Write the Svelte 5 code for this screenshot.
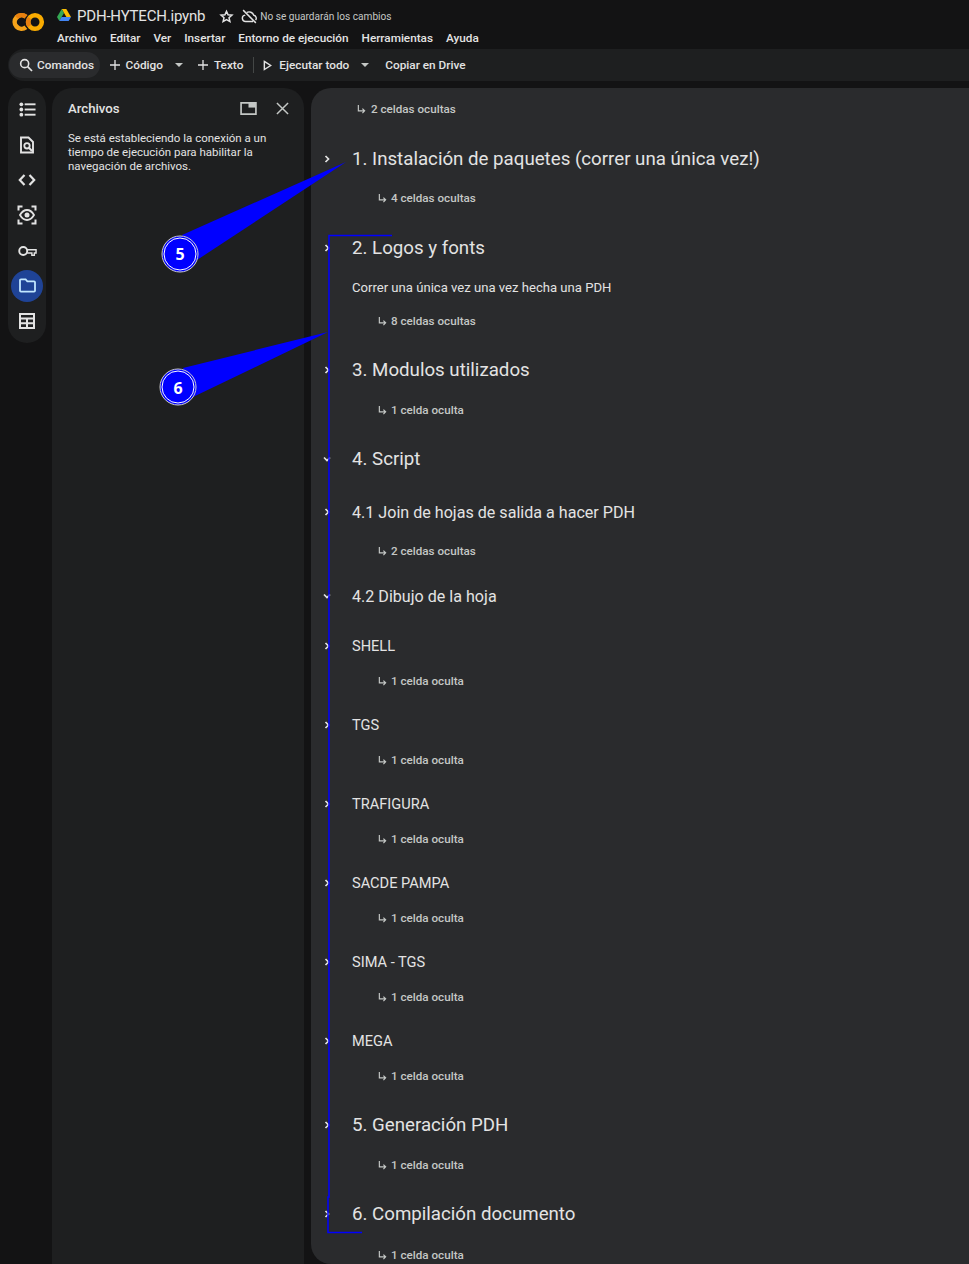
<script>
  const menu = ['Archivo','Editar','Ver','Insertar','Entorno de ejecución','Herramientas','Ayuda'];
  const items = [
    {t:'hidden', x:'first', s:'2 celdas ocultas'},
    {t:'h1', c:'r', s:'1. Instalación de paquetes (correr una única vez!)', first:true},
    {t:'hidden', s:'4 celdas ocultas'},
    {t:'h1', c:'r', s:'2. Logos y fonts'},
    {t:'p', s:'Correr una única vez una vez hecha una PDH'},
    {t:'hidden', s:'8 celdas ocultas'},
    {t:'h1', c:'r', s:'3. Modulos utilizados'},
    {t:'hidden', s:'1 celda oculta'},
    {t:'h1', c:'d', s:'4. Script'},
    {t:'h2', c:'r', s:'4.1 Join de hojas de salida a hacer PDH'},
    {t:'hidden', s:'2 celdas ocultas'},
    {t:'h2', c:'d', s:'4.2 Dibujo de la hoja'},
    ...['SHELL','TGS','TRAFIGURA','SACDE PAMPA','SIMA - TGS','MEGA'].flatMap(s => [
      {t:'h3', c:'r', s}, {t:'hidden', s:'1 celda oculta'}
    ]),
    {t:'h1', c:'r', s:'5. Generación PDH'},
    {t:'hidden', s:'1 celda oculta'},
    {t:'h1', c:'r', s:'6. Compilación documento'},
    {t:'hidden', x:'last', s:'1 celda oculta'},
  ];
</script>

<div class="page">
  <header class="top">
    <svg class="logo" viewBox="0 0 33 20" width="33" height="20" aria-hidden="true">
      <path d="M13.900 4.800A6.800 6.800 0 1 0 13.900 15.200" fill="none" stroke="#f5a31a" stroke-width="4.600"/>
      <path d="M13.900 4.800A6.800 6.800 0 0 0 4.500 5.400" fill="none" stroke="#e8800f" stroke-width="4.600"/>
      <circle cx="23" cy="10" r="6.800" fill="none" stroke="#f9ab00" stroke-width="4.600"/>
      <path d="M17.500 6A6.800 6.800 0 0 0 17.500 14" fill="none" stroke="#e8800f" stroke-width="4.600"/>
    </svg>
    <div class="titles">
      <div class="titlerow">
        <svg class="drive" viewBox="0 0 14 12" width="14" height="12" aria-hidden="true">
          <path d="M4.700 0h4.600l4.700 8H9.400z" fill="#fbbc04"/>
          <path d="M4.700 0 0 8l2.300 4 4.700-8z" fill="#34a853"/>
          <path d="M2.300 12h9.400L14 8H4.600z" fill="#4285f4"/>
        </svg>
        <span class="fname">PDH-HYTECH.ipynb</span>
        <svg class="star" viewBox="0 0 24 24" width="15" height="15" aria-hidden="true">
          <path d="M12 3.600l2.500 5.700 6.200.6-4.700 4.100 1.400 6.100L12 16.900l-5.400 3.200L8 14 3.300 9.900l6.200-.6z" fill="none" stroke="#e3e3e3" stroke-width="2.400"/>
        </svg>
        <svg class="cloud" viewBox="0 0 24 24" width="17" height="17" aria-hidden="true">
          <path d="M3 3l18 18M8.200 6.300A7 7 0 0 1 18 10.200a4.400 4.400 0 0 1 2.600 7M17 19H6.500A4.500 4.500 0 0 1 5.500 10.100L5.900 9.800" fill="none" stroke="#e3e3e3" stroke-width="2"/>
        </svg>
        <span class="unsaved">No se guardarán los cambios</span>
      </div>
      <nav class="menu">
        {#each menu as m}<span>{m}</span>{/each}
      </nav>
    </div>
  </header>

  <div class="toolbar">
    <div class="search">
      <svg viewBox="0 0 24 24" width="16" height="16" aria-hidden="true"><circle cx="10" cy="10" r="6" fill="none" stroke="#e3e3e3" stroke-width="2.400"/><path d="M14.500 14.500 21 21" stroke="#e3e3e3" stroke-width="2.600"/></svg>
      <span>Comandos</span>
    </div>
    <div class="tool code">
      <svg viewBox="0 0 12 12" width="12" height="12" aria-hidden="true"><path d="M6 1v10M1 6h10" stroke="#e3e3e3" stroke-width="1.300"/></svg>
      <span>Código</span>
      <i class="caret"></i>
    </div>
    <div class="tool text">
      <svg viewBox="0 0 12 12" width="12" height="12" aria-hidden="true"><path d="M6 1v10M1 6h10" stroke="#e3e3e3" stroke-width="1.300"/></svg>
      <span>Texto</span>
    </div>
    <div class="sep"></div>
    <div class="tool run">
      <svg viewBox="0 0 10 12" width="9" height="11" aria-hidden="true"><path d="M1.500 1.500 8.500 6l-7 4.500z" fill="none" stroke="#e3e3e3" stroke-width="1.600"/></svg>
      <span>Ejecutar todo</span>
      <i class="caret"></i>
    </div>
    <div class="tool copy"><span>Copiar en Drive</span></div>
  </div>

  <div class="body">
    <aside class="rail">
      <button class="ri lead" aria-label="Índice">
        <svg viewBox="0 0 18 18" width="17" height="17"><g fill="#e3e3e3"><circle cx="2.500" cy="3.500" r="2"/><circle cx="2.500" cy="9" r="2"/><circle cx="2.500" cy="14.500" r="2"/><rect x="6" y="2.500" width="11.500" height="2"/><rect x="6" y="8" width="11.500" height="2"/><rect x="6" y="13.500" width="11.500" height="2"/></g></svg>
      </button>
      <button class="ri" aria-label="Buscar">
        <svg viewBox="0 0 18 18" width="18" height="18"><path d="M3 1.500h7.500L15 6v10.500H3z" fill="none" stroke="#e3e3e3" stroke-width="1.900"/><circle cx="9" cy="9.800" r="2.700" fill="none" stroke="#e3e3e3" stroke-width="1.800"/><path d="M11 11.800 14 15" stroke="#e3e3e3" stroke-width="2"/></svg>
      </button>
      <button class="ri" aria-label="Código">
        <svg viewBox="0 0 18 18" width="18" height="18"><path d="M6.500 4 1.800 9l4.700 5M11.500 4l4.700 5-4.700 5" fill="none" stroke="#e3e3e3" stroke-width="2.200"/></svg>
      </button>
      <button class="ri" aria-label="Variables">
        <svg viewBox="0 0 20 20" width="20" height="20"><path d="M1.500 5.500v-4h4M14.500 1.500h4v4M18.500 14.500v4h-4M5.500 18.500h-4v-4" fill="none" stroke="#e3e3e3" stroke-width="2"/><path d="M3 10c2-3.400 4.400-5 7-5s5 1.600 7 5c-2 3.400-4.400 5-7 5s-5-1.600-7-5z" fill="none" stroke="#e3e3e3" stroke-width="1.800"/><circle cx="10" cy="10" r="2.500" fill="#e3e3e3"/></svg>
      </button>
      <button class="ri" aria-label="Secretos">
        <svg viewBox="0 0 20 12" width="19" height="12"><circle cx="5.500" cy="6" r="4.200" fill="none" stroke="#e3e3e3" stroke-width="2"/><path d="M9.700 4.700h9.300v3.400h-1.800v2.400h-2.600V8.100H9.700" fill="none" stroke="#e3e3e3" stroke-width="1.500"/></svg>
      </button>
      <button class="ri active" aria-label="Archivos">
        <svg viewBox="0 0 18 16" width="17" height="15"><path d="M1 2.500A1 1 0 0 1 2 1.500h5l1.800 2H16a1 1 0 0 1 1 1v9a1 1 0 0 1-1 1H2a1 1 0 0 1-1-1z" fill="none" stroke="#c2e7ff" stroke-width="1.900"/></svg>
      </button>
      <button class="ri" aria-label="Datos">
        <svg viewBox="0 0 16 16" width="16" height="16"><path d="M1 1h14v14H1zM1 5.500h14M1 10.200h14M8 5.500V15" fill="none" stroke="#e3e3e3" stroke-width="2"/></svg>
      </button>
    </aside>

    <section class="panel">
      <div class="phead">
        <h2>Archivos</h2>
        <svg class="pop" viewBox="0 0 18 14" width="17" height="13" aria-hidden="true"><path d="M1 1h16v12H1z" fill="none" stroke="#c4c7c5" stroke-width="1.800"/><rect x="9" y="1" width="8" height="5" fill="#c4c7c5"/></svg>
        <svg class="close" viewBox="0 0 14 14" width="13" height="13" aria-hidden="true"><path d="M1 1l12 12M13 1 1 13" stroke="#c4c7c5" stroke-width="1.600"/></svg>
      </div>
      <p>Se está estableciendo la conexión a un tiempo de ejecución para habilitar la navegación de archivos.</p>
    </section>

    <main class="nb">
      {#each items as it}
        {#if it.t === 'hidden'}
          <div class="hid" class:first={it.x === 'first'} class:last={it.x === 'last'}>
            <svg viewBox="0 0 10 11" width="9" height="10" aria-hidden="true"><path d="M1.500 1v6.500h6.500M6 5 8.500 7.500 6 10" fill="none" stroke="#c4c7c5" stroke-width="1.300"/></svg>
            <span>{it.s}</span>
          </div>
        {:else}
          <div class="row {it.t}" class:first={it.first}>
            <div class="chev">
              {#if it.c === 'r'}
                <svg viewBox="0 0 8 8" width="8" height="8" aria-hidden="true"><path d="M2.500 1 5.500 4l-3 3" fill="none" stroke="#e3e3e3" stroke-width="1.700"/></svg>
              {:else if it.c === 'd'}
                <svg viewBox="0 0 8 8" width="8" height="8" aria-hidden="true"><path d="M1 2.500 4 5.500l3-3" fill="none" stroke="#e3e3e3" stroke-width="1.700"/></svg>
              {/if}
            </div>
            <div class="txt">{it.s}</div>
          </div>
        {/if}
      {/each}
    </main>
  </div>

  <svg class="marks" width="969" height="1264" viewBox="0 0 969 1264" aria-hidden="true">
    <polygon points="182,235 346,162 197,260" fill="#0000ff"/>
    <polygon points="183,368 328,332 193,397" fill="#0000ff"/>
    <path d="M392 235.500H329V1197H328V1232.500H362" fill="none" stroke="#0000ff" stroke-width="1.500"/>
    <g>
      <circle cx="180" cy="254" r="18" fill="#0000ff" stroke="#cfcfcf" stroke-width="1"/>
      <circle cx="180" cy="254" r="16" fill="#0000ff" stroke="#fff" stroke-width="1"/>
      <text x="180" y="260" class="num">5</text>
      <circle cx="178" cy="387" r="18" fill="#0000ff" stroke="#cfcfcf" stroke-width="1"/>
      <circle cx="178" cy="387" r="16" fill="#0000ff" stroke="#fff" stroke-width="1"/>
      <text x="178" y="394" class="num">6</text>
    </g>
  </svg>
</div>

<style>
  :global(body) { margin: 0; background: #131314; }
  .page {
    position: relative;
    width: 969px;
    height: 1264px;
    overflow: hidden;
    background: #131314;
    font-family: Roboto, "Liberation Sans", sans-serif;
    color: #e3e3e3;
  }
  .top { display: flex; height: 49px; padding-left: 12px; box-sizing: border-box; }
  .logo { margin-top: 12px; flex: none; }
  .titles { margin-left: 12px; padding-top: 7px; }
  .titlerow { display: flex; align-items: center; height: 18px; }
  .drive { margin-right: 6px; margin-top: -3px; }
  .fname { font-size: 15px; letter-spacing: -0.200px; margin-right: 14px; }
  .star { margin-right: 7px; }
  .cloud { margin-right: 2px; }
  .unsaved { font-size: 10.100px; color: #c4c7c5; }
  .menu { display: flex; gap: 13px; margin-top: 5px; font-size: 11.750px; font-weight: 500; line-height: 16px; }

  .toolbar {
    display: flex; align-items: center; height: 32px;
    background: #1e1f20; margin-left: 8px; border-radius: 16px 0 0 16px;
    font-size: 11.800px; font-weight: 500;
  }
  .search {
    display: flex; align-items: center; gap: 3px; height: 26px;
    padding: 0 6px 0 9px; margin-left: 1px;
    background: #2a2b2d; border-radius: 13px;
  }
  .tool { display: flex; align-items: center; gap: 5px; }
  .code { margin-left: 8.500px; }
  .caret { width: 0; height: 0; border: 4px solid transparent; border-top-color: #c4c7c5; border-bottom: 0; margin-left: 7px; }
  .run .caret { margin-left: 5px; }
  .text { margin-left: 14px; }
  .sep { width: 1px; height: 16px; background: #444746; margin: 0 9px 0 10px; }
  .run { gap: 7px; }
  .copy { margin-left: 16px; }

  .body { display: flex; margin-top: 7px; height: 1176px; }
  .rail {
    width: 38px; height: 255px; margin-left: 8px; flex: none;
    background: #1e1f20; border-radius: 19px;
    display: flex; flex-direction: column; align-items: center; padding-top: 6px; box-sizing: border-box;
  }
  .ri {
    width: 32px; height: 32px; margin-bottom: 3.170px; flex: none; padding: 0;
    display: flex; align-items: center; justify-content: center;
    background: none; border: 0; border-radius: 50%;
  }
  .ri.lead { margin-top: -1px; margin-bottom: 4.170px; }
  .ri.active { background: #1f4396; }
  .panel {
    width: 252px; margin-left: 6px; flex: none;
    background: #1e1f20; border-radius: 20px 20px 0 0;
    padding: 11px 15px 12px 16px; box-sizing: border-box;
  }
  .phead { display: flex; align-items: center; height: 19px; }
  .phead h2 { margin: 0; font-size: 13.200px; font-weight: 500; flex: 1; }
  .pop { margin-right: 19px; }
  .panel p { margin: 13px 0 0; font-size: 11.500px; font-weight: 400; line-height: 14px; color: #e3e3e3; width: 205px; }

  .nb {
    width: 658px; margin-left: 7px; flex: none; box-sizing: border-box;
    background: #2a2b2d; border-radius: 20px 0 0 20px;
    padding: 11px 0 0 10px; overflow: hidden;
  }
  .hid {
    display: flex; align-items: center; gap: 4px; height: 20px;
    margin: 14px 0 0 57px; font-size: 11.650px; font-weight: 500; color: #c4c7c5;
  }
  .h1 + .hid { margin-top: 15px; }
  .h1.first + .hid { margin-top: 14px; }
  .h1 + .hid.last { margin-top: 16px; }
  .hid.first { margin: 0 0 0 36px; gap: 5px; }
  .row { display: flex; align-items: center; }
  .chev { width: 12px; flex: none; display: flex; justify-content: center; margin-right: 19px; }
  .h1 { height: 30px; margin-top: 24px; font-size: 18.700px; }
  .h1.first { margin-top: 25px; }
  .h1.first + .hid + .h1 { margin-top: 25px; }
  .h2 { height: 30px; margin-top: 20px; font-size: 16.100px; }
  .h1 + .h2 { margin-top: 23px; }
  .h3 { height: 22px; margin-top: 23px; font-size: 14.600px; }
  .h2 + .h3 { margin-top: 24px; }
  .p { height: 20px; margin-top: 14px; font-size: 13.100px; }

  .marks { position: absolute; left: 0; top: 0; pointer-events: none; }
  .num { font-family: "Noto Sans", sans-serif; font-weight: 700; font-size: 16px; fill: #fff; text-anchor: middle; }
</style>
